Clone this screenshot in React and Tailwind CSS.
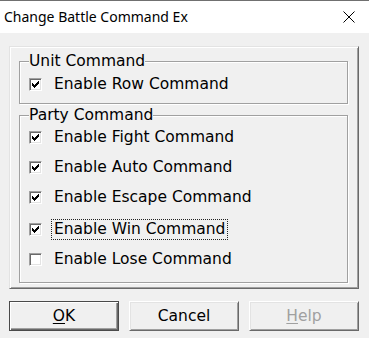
import React from "react";

const Check = ({ checked }) => (
  <span className="relative block w-[13px] h-[13px] shrink-0 bg-white border border-t-[#a0a0a0] border-l-[#a0a0a0] border-r-white border-b-white shadow-[inset_1px_1px_0_#696969,inset_-1px_-1px_0_#e3e3e3]">
    {checked && (
      <svg width="13" height="13" viewBox="0 0 13 13" className="absolute -left-[1px] -top-[1px]" shapeRendering="crispEdges">
        <rect x="3" y="5" width="1" height="3" fill="#000" />
        <rect x="4" y="6" width="1" height="3" fill="#000" />
        <rect x="5" y="7" width="1" height="3" fill="#000" />
        <rect x="6" y="6" width="1" height="3" fill="#000" />
        <rect x="7" y="5" width="1" height="3" fill="#000" />
        <rect x="8" y="4" width="1" height="3" fill="#000" />
        <rect x="9" y="3" width="1" height="3" fill="#000" />
      </svg>
    )}
  </span>
);

const Row = ({ label, checked, focus, extra = "" }) => (
  <div className={"flex items-center h-[30px] pl-[9px] " + extra}>
    <Check checked={checked} />
    <span
      className={
        "ml-[9px] px-[2px] leading-[19px] border border-dotted " +
        (focus ? "border-[#222]" : "border-transparent")
      }
    >
      {label}
    </span>
  </div>
);

const Group = ({ title, children, extra = "" }) => (
  <div className={"w-[329px] border border-[#a0a0a0] shadow-[inset_1px_1px_0_#fff,1px_1px_0_#fff] " + extra}>
    <div className="-mt-[9px] ml-[9px] w-fit bg-[#f0f0f0] leading-[16px]">{title}</div>
    {children}
  </div>
);

export default function App() {
  return (
    <div
      className="w-[369px] h-[338px] bg-[#f0f0f0] flex flex-col border-t border-[#707070] text-black overflow-hidden"
      style={{ fontFamily: '"DejaVu Sans", sans-serif' }}
    >
      <div className="h-[32px] bg-white flex items-center justify-between pl-[4px] pr-[14px]">
        <span className="text-[14px] leading-[20px]" style={{ fontFamily: '"Noto Sans", sans-serif' }}>
          Change Battle Command Ex
        </span>
        <svg width="12" height="12" viewBox="0 0 12 12">
          <path d="M0.5 0.5 L11.5 11.5 M11.5 0.5 L0.5 11.5" stroke="#000" strokeWidth="1" />
        </svg>
      </div>
      <div className="flex-1 px-[9px] pt-[13px] text-[15.5px]">
        <div className="w-[350px] h-[243px] border border-t-[#e3e3e3] border-l-[#e3e3e3] border-r-[#696969] border-b-[#696969] shadow-[inset_1px_1px_0_#fff,inset_-1px_-1px_0_#a0a0a0] px-[9px] pt-[14px]">
          <Group title="Unit Command" extra="pb-[4px]">
            <Row label="Enable Row Command" checked extra="h-[28px]" />
          </Group>
          <Group title="Party Command" extra="mt-[11px] pb-[8px]">
            <Row label="Enable Fight Command" checked extra="-mt-[1px]" />
            <Row label="Enable Auto Command" checked />
            <Row label="Enable Escape Command" checked />
            <Row label="Enable Win Command" checked focus extra="mt-[2px]" />
            <Row label="Enable Lose Command" />
          </Group>
        </div>
        <div className="flex gap-[10px] mt-[12px]">
          <button className="w-[110px] h-[30px] bg-[#f0f0f0] border border-[#4a4a4a] shadow-[inset_1px_1px_0_#fff,inset_-1px_-1px_0_#696969,inset_-2px_-2px_0_#a0a0a0] flex items-center justify-center leading-[18px]">
            <span><span className="underline underline-offset-2">O</span>K</span>
          </button>
          <button className="w-[110px] h-[30px] bg-[#f0f0f0] border border-t-white border-l-white border-r-[#696969] border-b-[#696969] shadow-[inset_1px_1px_0_#e3e3e3,inset_-1px_-1px_0_#a0a0a0] flex items-center justify-center leading-[18px]">
            Cancel
          </button>
          <button className="w-[110px] h-[30px] bg-[#f0f0f0] border border-t-white border-l-white border-r-[#696969] border-b-[#696969] shadow-[inset_1px_1px_0_#e3e3e3,inset_-1px_-1px_0_#a0a0a0] flex items-center justify-center leading-[18px] text-[#a0a0a0]">
            <span><span className="underline underline-offset-2">H</span>elp</span>
          </button>
        </div>
      </div>
    </div>
  );
}
